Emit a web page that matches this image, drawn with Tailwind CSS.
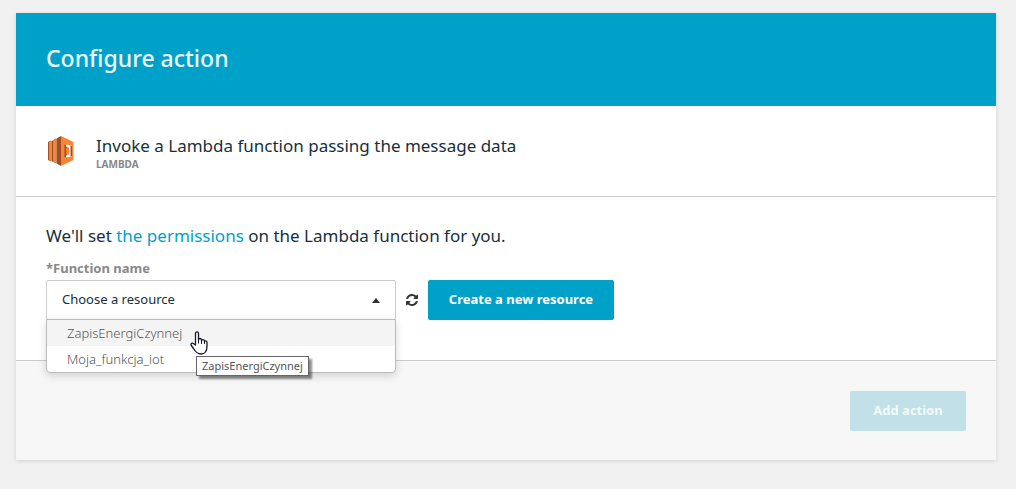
<!DOCTYPE html>
<html lang="en">
<head>
<meta charset="utf-8">
<meta name="viewport" content="width=device-width, initial-scale=1">
<title>Configure action</title>
<script src="https://cdn.jsdelivr.net/npm/@tailwindcss/browser@4"></script>
</head>
<body class="min-h-screen bg-[#f1f1f1] pl-4 pr-5 pt-[13px] pb-7 font-['Noto_Sans','Open_Sans',sans-serif] text-[#16303b]">
<main class="bg-white shadow-[0_1px_4px_rgba(0,0,0,0.14)]">
  <header class="bg-[#00a1c9] px-[30px] pt-[29px] pb-[31px]">
    <h1 class="text-[23px] leading-[33px] font-medium text-[#eef8fb]">Configure action</h1>
  </header>

  <section class="flex items-start gap-5 border-b border-[#ccc] px-[30px] pt-[30px] pb-6">
    <svg class="size-[30px] shrink-0" viewBox="0 0 30 30" aria-hidden="true">
      <path fill="#9d5025" d="M2 6 5 4.500v21L2 24z"/>
      <path fill="#f58536" d="M3 5.500 6 5v20L3 24.500z"/>
      <path fill="#9d5025" d="M6 5 10 2.500v24.500L6 25.500z"/>
      <path fill="#f58536" d="M7 4 10.500 3v23.500L7 26z"/>
      <path fill="#9d5025" d="M10.500 2.500 15 0v30l-4.500-2.500z"/>
      <path fill="#f58536" d="M15 0 27.500 6v18L15 30z"/>
      <path fill="#9d5025" d="M18.500 9 21 8.500v13l-2.500-.5z"/>
      <path fill="#fff" d="M20 8.500 25.500 9.500v11L20 21.500v-2l3-1v-7l-3-1z"/>
      <path fill="#f58536" d="m20 11.500 3.500 2.500v2L20 18.500z"/>
      <path fill="#9d5025" d="M24.500 9.500 26 10v10l-1.500.5z"/>
    </svg>
    <div>
      <h2 class="text-[17px] leading-5">Invoke a Lambda function passing the message data</h2>
      <p class="text-[10px] leading-4 font-bold text-[#888]">LAMBDA</p>
    </div>
  </section>

  <section class="px-[30px] pt-[27px] pb-10">
    <p class="text-[17px] leading-6">We'll set <a href="#permissions" class="text-[#00a1c9]">the permissions</a> on the Lambda function for you.</p>
    <label for="fn" class="mt-2.5 mb-0.5 block text-[13px] leading-5 font-bold text-[#888]">*Function name</label>
    <div class="flex items-center">
      <div class="relative w-[350px]">
        <select id="fn" class="block h-10 w-full appearance-none rounded-xs border border-[#ccc] bg-white pl-[15px] pr-8 text-[13px] text-[#16303b]">
          <option>Choose a resource</option>
          <option>ZapisEnergiCzynnej</option>
          <option>Moja_funkcja_iot</option>
        </select>
        <svg class="pointer-events-none absolute top-[18px] right-4 h-[5px] w-2" viewBox="0 0 8 4" preserveAspectRatio="none" aria-hidden="true"><path fill="#333" d="M0 4 4 0l4 4z"/></svg>
        <ul role="listbox" aria-label="Function name" class="absolute inset-x-0 top-full -mt-px rounded-b border border-[#bbb] bg-white text-[13px] leading-[26px] font-light text-[#555] shadow-[0_3px_8px_rgba(0,0,0,0.15)]">
          <li role="option" aria-selected="true" class="bg-[#f4f4f4] px-5">ZapisEnergiCzynnej</li>
          <li role="option" aria-selected="false" class="px-5">Moja_funkcja_iot</li>
        </ul>
        <svg class="absolute top-[51px] left-36 z-10 h-6 w-[18px]" viewBox="0 0 18 24" aria-hidden="true">
          <path fill="#fff" stroke="#16182a" stroke-width="1.300" stroke-linejoin="round" d="M5.500 14V2.500C5.500 .3 8.500.3 8.500 2.500V9c0-2 3-2 3 0v1c0-2 3-1.600 3 .2v.8c0-1.800 2.500-1.400 2.500.4V15c0 4-1.500 8-6 8-4 0-5.500-2-7.500-5.500L1.300 14.500c-1-2 1-3 2.400-1.800z"/>
          <path fill="none" stroke="#16182a" d="M8.500 8.500v4M11.500 9v4M14.500 10v3"/>
        </svg>
        <div role="tooltip" class="absolute top-[76px] left-[150px] z-10 border border-[#666] bg-white px-[5px] text-[11px] leading-[18px] whitespace-nowrap text-[#555] shadow-[3px_3px_2px_rgba(0,0,0,0.45)]">ZapisEnergiCzynnej</div>
      </div>
      <button type="button" aria-label="Refresh" class="flex w-8 justify-center">
        <svg class="size-3" viewBox="0 0 1536 1536" aria-hidden="true"><path fill="#333" d="M1511 928q0 5-1 7-64 268-268 434.500T764 1536q-146 0-282.500-55T238 1324l-129 129q-19 19-45 19t-45-19-19-45V960q0-26 19-45t45-19h448q26 0 45 19t19 45-19 45l-137 137q71 66 161 102t187 36q134 0 250-65t186-179q11-17 53-117 8-23 30-23h192q13 0 22.500 9.500t9.500 22.500zm25-800v448q0 26-19 45t-45 19h-448q-26 0-45-19t-19-45 19-45l138-138Q969 256 768 256q-134 0-250 65T332 500q-11 17-53 117-8 23-30 23H50q-13 0-22.500-9.500T18 608v-7q65-268 270-434.500T768 0q146 0 284 55.500T1297 212l130-129q19-19 45-19t45 19 19 45z"/></svg>
      </button>
      <button type="button" class="h-10 w-[186px] rounded-xs bg-[#00a1c9] text-[13px] font-bold text-white">Create a new resource</button>
    </div>
  </section>

  <footer class="flex justify-end border-t border-[#ccc] bg-[#f7f7f7] px-[30px] pt-[30px] pb-[29px]">
    <button type="button" disabled class="h-10 w-[116px] rounded-xs bg-[#c1e0e8] text-[13px] font-bold text-[#f3fafc]">Add action</button>
  </footer>
</main>
</body>
</html>
